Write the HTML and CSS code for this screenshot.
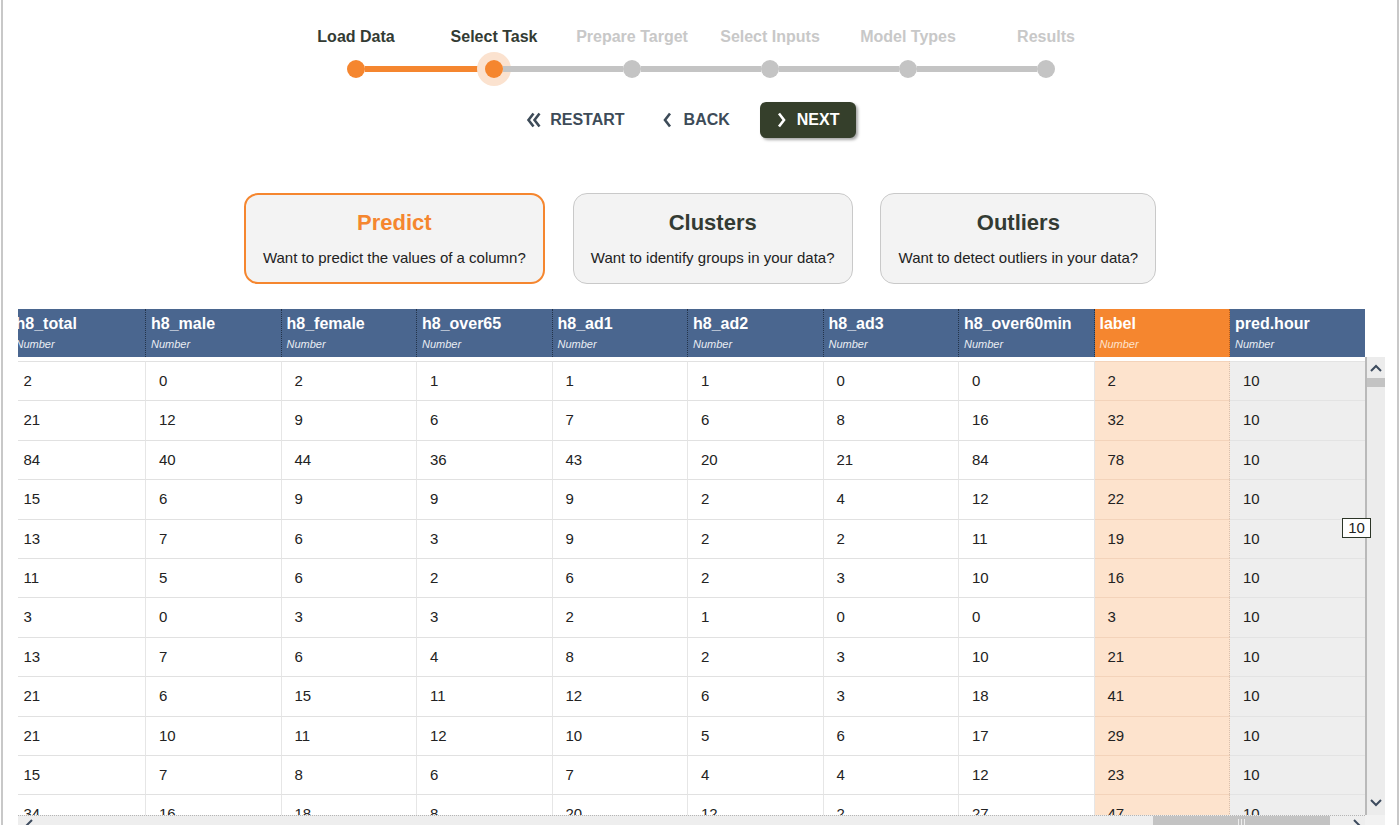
FILE: index.html
```html
<!DOCTYPE html>
<html>
<head>
<meta charset="utf-8">
<title>Select Task</title>
<link rel="stylesheet" href="styles.css">
</head>
<body>
<div class="page">
  <div class="stepper">
    <div class="step-labels">
      <span class="step-label active">Load Data</span>
      <span class="step-label active">Select Task</span>
      <span class="step-label">Prepare Target</span>
      <span class="step-label">Select Inputs</span>
      <span class="step-label">Model Types</span>
      <span class="step-label">Results</span>
    </div>
    <div class="track">
      <span class="dot done"></span>
      <span class="seg done"></span>
      <span class="dot done current"></span>
      <span class="seg"></span>
      <span class="dot"></span>
      <span class="seg"></span>
      <span class="dot"></span>
      <span class="seg"></span>
      <span class="dot"></span>
      <span class="seg"></span>
      <span class="dot"></span>
    </div>
  </div>

  <div class="nav">
    <button class="nav-link restart">
      <svg class="ico-dbl" width="16" height="16" viewBox="0 0 16 16"><polyline points="7.5,1.5 2.5,8 7.5,14.5" /><polyline points="13.5,1.5 8.5,8 13.5,14.5" /></svg>
      <span>RESTART</span>
    </button>
    <button class="nav-link back">
      <svg class="ico-one" width="9" height="16" viewBox="0 0 9 16"><polyline points="7,1.5 2,8 7,14.5" /></svg>
      <span>BACK</span>
    </button>
    <button class="next-btn">
      <svg class="ico-next" width="9" height="16" viewBox="0 0 9 16"><polyline points="2,1.5 7,8 2,14.5" /></svg>
      <span>NEXT</span>
    </button>
  </div>

  <div class="tasks">
    <div class="task-card selected">
      <div class="task-title">Predict</div>
      <div class="task-sub">Want to predict the values of a column?</div>
    </div>
    <div class="task-card">
      <div class="task-title">Clusters</div>
      <div class="task-sub">Want to identify groups in your data?</div>
    </div>
    <div class="task-card third">
      <div class="task-title">Outliers</div>
      <div class="task-sub">Want to detect outliers in your data?</div>
    </div>
  </div>

  <div class="grid">
    <div class="grid-head">
      <div class="strip">
        <div class="hcell"><div class="hname">h8_total</div><div class="htype">Number</div></div>
        <div class="hcell"><div class="hname">h8_male</div><div class="htype">Number</div></div>
        <div class="hcell"><div class="hname">h8_female</div><div class="htype">Number</div></div>
        <div class="hcell"><div class="hname">h8_over65</div><div class="htype">Number</div></div>
        <div class="hcell"><div class="hname">h8_ad1</div><div class="htype">Number</div></div>
        <div class="hcell"><div class="hname">h8_ad2</div><div class="htype">Number</div></div>
        <div class="hcell"><div class="hname">h8_ad3</div><div class="htype">Number</div></div>
        <div class="hcell"><div class="hname">h8_over60min</div><div class="htype">Number</div></div>
        <div class="hcell target"><div class="hname">label</div><div class="htype">Number</div></div>
        <div class="hcell"><div class="hname">pred.hour</div><div class="htype">Number</div></div>
      </div>
    </div>
    <div class="head-corner"></div>
    <div class="grid-body">
      <div class="strip rows">
        <div class="row"><span>2</span><span>0</span><span>2</span><span>1</span><span>1</span><span>1</span><span>0</span><span>0</span><span class="t">2</span><span class="p">10</span></div>
        <div class="row"><span>21</span><span>12</span><span>9</span><span>6</span><span>7</span><span>6</span><span>8</span><span>16</span><span class="t">32</span><span class="p">10</span></div>
        <div class="row"><span>84</span><span>40</span><span>44</span><span>36</span><span>43</span><span>20</span><span>21</span><span>84</span><span class="t">78</span><span class="p">10</span></div>
        <div class="row"><span>15</span><span>6</span><span>9</span><span>9</span><span>9</span><span>2</span><span>4</span><span>12</span><span class="t">22</span><span class="p">10</span></div>
        <div class="row"><span>13</span><span>7</span><span>6</span><span>3</span><span>9</span><span>2</span><span>2</span><span>11</span><span class="t">19</span><span class="p">10</span></div>
        <div class="row"><span>11</span><span>5</span><span>6</span><span>2</span><span>6</span><span>2</span><span>3</span><span>10</span><span class="t">16</span><span class="p">10</span></div>
        <div class="row"><span>3</span><span>0</span><span>3</span><span>3</span><span>2</span><span>1</span><span>0</span><span>0</span><span class="t">3</span><span class="p">10</span></div>
        <div class="row"><span>13</span><span>7</span><span>6</span><span>4</span><span>8</span><span>2</span><span>3</span><span>10</span><span class="t">21</span><span class="p">10</span></div>
        <div class="row"><span>21</span><span>6</span><span>15</span><span>11</span><span>12</span><span>6</span><span>3</span><span>18</span><span class="t">41</span><span class="p">10</span></div>
        <div class="row"><span>21</span><span>10</span><span>11</span><span>12</span><span>10</span><span>5</span><span>6</span><span>17</span><span class="t">29</span><span class="p">10</span></div>
        <div class="row"><span>15</span><span>7</span><span>8</span><span>6</span><span>7</span><span>4</span><span>4</span><span>12</span><span class="t">23</span><span class="p">10</span></div>
        <div class="row"><span>34</span><span>16</span><span>18</span><span>8</span><span>20</span><span>12</span><span>2</span><span>27</span><span class="t">47</span><span class="p">10</span></div>
      </div>
    </div>
    <div class="vscroll">
      <svg class="sb-arrow" width="12" height="8" viewBox="0 0 12 8"><polyline points="1,7 6,2 11,7" /></svg>
      <div class="vthumb"></div>
      <div class="vspace"></div>
      <svg class="sb-arrow" width="12" height="8" viewBox="0 0 12 8"><polyline points="1,1 6,6 11,1" /></svg>
    </div>
    <div class="hscroll">
      <svg class="sb-harrow" width="8" height="12" viewBox="0 0 8 12"><polyline points="7,1 2,6 7,11" /></svg>
      <div class="hspace"></div>
      <div class="hthumb"><span class="grip"></span><span class="grip"></span><span class="grip"></span></div>
      <div class="hspace2"></div>
      <svg class="sb-harrow" width="8" height="12" viewBox="0 0 8 12"><polyline points="1,1 6,6 1,11" /></svg>
    </div>
    <div class="corner"></div>
    <div class="cell-tip">10</div>
  </div>
</div>
</body>
</html>
```

FILE: styles.css
```css
html, body {
  margin: 0;
  padding: 0;
  height: 825px;
  overflow: hidden;
  background: #ffffff;
}

body {
  font-family: "Liberation Sans", Arial, sans-serif;
  color: #222222;
}

.page {
  margin: 0 1px;
  height: 825px;
  border-left: 2px solid #c8c8c8;
  border-right: 2px solid #c8c8c8;
  box-sizing: border-box;
  display: flex;
  flex-direction: column;
  align-items: center;
}

/* ---------- stepper ---------- */
.stepper {
  padding-top: 28px;
  padding-left: 2px;
  display: flex;
  flex-direction: column;
  align-items: center;
}

.step-labels {
  display: flex;
}

.step-label {
  width: 138px;
  text-align: center;
  font-size: 16px;
  line-height: 18px;
  font-weight: bold;
  color: #c8c8c8;
}

.step-label.active {
  color: #333b33;
}

.track {
  margin-top: 6px;
  height: 34px;
  display: flex;
  align-items: center;
}

.dot {
  width: 18px;
  height: 18px;
  border-radius: 50%;
  background: #c4c4c4;
  flex: none;
}

.dot.done {
  background: #f5862f;
}

.dot.current {
  box-shadow: 0 0 0 8px #fbe2cf;
}

.seg {
  width: 120px;
  height: 6px;
  background: #c4c4c4;
  flex: none;
}

.seg.done {
  background: #f5862f;
}

/* ---------- nav buttons ---------- */
.nav {
  margin-top: 16px;
  display: flex;
  align-items: center;
  padding-right: 18px;
}

.nav .nav-btn-reset,
.nav button {
  font-family: "Liberation Sans", Arial, sans-serif;
  font-weight: bold;
  font-size: 16px;
  border: none;
  background: none;
  padding: 0;
  display: flex;
  align-items: center;
  cursor: pointer;
}

.nav .nav-link {
  color: #3d4b58;
  height: 36px;
}

.nav-link svg polyline {
  fill: none;
  stroke: #3d4b58;
  stroke-width: 2.6;
}

.nav .restart {
  gap: 8px;
}

.nav .back {
  margin-left: 38px;
  gap: 12px;
}

.nav .next-btn {
  margin-left: 30px;
  width: 96px;
  height: 36px;
  border-radius: 6px;
  background: #353f2b;
  color: #ffffff;
  padding-left: 17px;
  gap: 11px;
  box-shadow: 2px 2px 3px rgba(0, 0, 0, 0.35);
  box-sizing: border-box;
}

.ico-next polyline {
  fill: none;
  stroke: #ffffff;
  stroke-width: 2.6;
}

/* ---------- task cards ---------- */
.tasks {
  margin-top: 55px;
  display: flex;
}

.task-card {
  height: 91px;
  box-sizing: border-box;
  border: 1px solid #c9c9c9;
  border-radius: 14px;
  background: #f3f3f3;
  padding: 0 17px;
  display: flex;
  flex-direction: column;
  align-items: center;
  justify-content: center;
  margin-left: 28px;
}

.task-card.third {
  margin-left: 27px;
  padding: 0 17px 0 18px;
}

.task-card.selected {
  border: 2px solid #f5862f;
  padding: 0 17px;
  margin-left: 0;
}

.task-title {
  font-size: 22px;
  line-height: 24px;
  font-weight: bold;
  color: #333b33;
}

.selected .task-title {
  color: #f5862f;
}

.task-sub {
  margin-top: 14px;
  font-size: 15px;
  line-height: 18px;
  color: #222222;
  white-space: nowrap;
}

/* ---------- data grid ---------- */
.grid {
  margin-top: 25px;
  align-self: flex-start;
  margin-left: 15px;
  position: relative;
  display: grid;
  grid-template-columns: 1347px 20px;
  grid-template-rows: 48px 458px 10px;
}

.grid-head {
  grid-column: 1;
  grid-row: 1;
  overflow: hidden;
}

.head-corner {
  grid-column: 2;
  grid-row: 1;
}

.strip {
  margin-left: -7.5px;
  width: 1355px;
  display: flex;
}

.hcell {
  width: 135.5px;
  height: 48px;
  box-sizing: border-box;
  flex: none;
  background: #4a668f;
  border-right: 1px dotted #24344a;
  padding: 6px 0 0 5px;
  color: #ffffff;
}

.hcell:last-child {
  border-right: none;
}

.hcell.target {
  background: #f5862f;
  border-right: 1px dotted #b85e1c;
}

.hname {
  font-size: 16px;
  line-height: 18px;
  font-weight: bold;
  white-space: nowrap;
}

.htype {
  margin-top: 5px;
  font-size: 11px;
  line-height: 13px;
  font-style: italic;
  color: #e9edf3;
}

.target .htype {
  color: #fde3cd;
}

.grid-body {
  grid-column: 1;
  grid-row: 2;
  overflow: hidden;
  padding-top: 4px;
  box-sizing: border-box;
}

.rows {
  flex-direction: column;
}

.row {
  display: flex;
  height: 39.4px;
  flex: none;
}

.row span {
  width: 135.5px;
  flex: none;
  box-sizing: border-box;
  border-top: 1px solid #e1e1e1;
  border-right: 1px solid #e6e6e6;
  padding-left: 13px;
  font-size: 15px;
  line-height: 38px;
  color: #222222;
  background: #ffffff;
}

.row span.t {
  background: #fde3cd;
  border-right: 1px dotted #d8c0ae;
  border-top-color: #f3d3ba;
}

.row span.p {
  background: #eeeeee;
  border-right: none;
  border-top-color: #e3e3e3;
}

/* ---------- scrollbars ---------- */
.vscroll {
  grid-column: 2;
  grid-row: 2;
  border-left: 2px solid #b9b9b9;
  background: #ececec;
  display: flex;
  flex-direction: column;
  align-items: center;
  padding-top: 7px;
  padding-bottom: 8px;
  box-sizing: border-box;
}

.sb-arrow {
  flex: none;
}

.sb-arrow polyline,
.sb-harrow polyline {
  fill: none;
  stroke: #3d4b5e;
  stroke-width: 2;
}

.vthumb {
  margin-top: 6px;
  align-self: stretch;
  height: 9px;
  flex: none;
  background: #c3c3c3;
}

.vspace {
  flex: 1;
}

.hscroll {
  grid-column: 1;
  grid-row: 3;
  background: #eeeeee;
  border-top: 1px dotted #b5b5b5;
  display: flex;
  align-items: flex-start;
  box-sizing: border-box;
  padding-left: 7px;
  padding-top: 3px;
}

.sb-harrow {
  flex: none;
}

.hspace {
  width: 1120px;
  flex: none;
}

.hthumb {
  width: 177px;
  height: 12px;
  margin-top: -3px;
  flex: none;
  background: #c3c3c3;
  display: flex;
  justify-content: center;
  gap: 2px;
  padding-top: 3px;
  box-sizing: border-box;
}

.grip {
  width: 1px;
  height: 8px;
  background: #eeeeee;
}

.hspace2 {
  width: 23px;
  flex: none;
}

.corner {
  grid-column: 2;
  grid-row: 3;
  background: #f2f2f2;
}

.cell-tip {
  position: absolute;
  left: 1324px;
  top: 209px;
  width: 29px;
  height: 20px;
  box-sizing: border-box;
  border: 1px solid #2c3527;
  background: #ffffff;
  font-size: 15px;
  line-height: 18px;
  text-align: center;
  color: #222222;
}
```
